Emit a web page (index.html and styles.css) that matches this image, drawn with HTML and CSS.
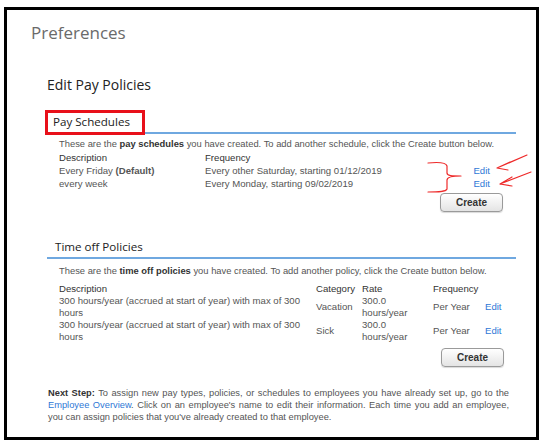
FILE: index.html
```html
<!DOCTYPE html>
<html>
<head>
<meta charset="utf-8">
<link rel="stylesheet" href="styles.css">
</head>
<body>
<div class="frame">
  <h1 class="page-title">Preferences</h1>
  <div class="content">
    <h2 class="page-sub">Edit Pay Policies</h2>

    <section class="block">
      <h3 class="block-head"><span class="hl-box"></span>Pay Schedules</h3>
      <p class="intro">These are the <b>pay schedules</b> you have created. To add another schedule, click the Create button below.</p>
      <div class="grid sched">
        <div class="th">Description</div><div class="th">Frequency</div><div></div>
        <div>Every Friday <b>(Default)</b></div><div>Every other Saturday, starting 01/12/2019</div><a class="link">Edit</a>
        <div>every week</div><div>Every Monday, starting 09/02/2019</div><a class="link">Edit</a>
      </div>
      <div class="actions a1"><button class="btn">Create</button></div>
    </section>

    <section class="block b2">
      <h3 class="block-head">Time off Policies</h3>
      <p class="intro i2">These are the <b>time off policies</b> you have created. To add another policy, click the Create button below.</p>
      <div class="grid timeoff">
        <div class="th">Description</div><div class="th">Category</div><div class="th">Rate</div><div class="th">Frequency</div><div></div>
        <div class="desc">300 hours/year (accrued at start of year) with max of 300 hours</div><div class="mid">Vacation</div><div>300.0<br>hours/year</div><div class="mid">Per Year</div><a class="link mid">Edit</a>
        <div class="desc">300 hours/year (accrued at start of year) with max of 300 hours</div><div class="mid">Sick</div><div>300.0<br>hours/year</div><div class="mid">Per Year</div><a class="link mid">Edit</a>
      </div>
      <div class="actions a2"><button class="btn">Create</button></div>
    </section>

    <p class="next"><b>Next Step:</b> To assign new pay types, policies, or schedules to employees you have already set up, go to the <a class="link">Employee Overview</a>. Click on an employee's name to edit their information. Each time you add an employee, you can assign policies that you've already created to that employee.</p>
  </div>

  <!-- hand-drawn red marks around the Edit links -->
  <svg class="marks" width="551" height="447" viewBox="0 0 551 447">
    <g fill="none" stroke="#ee2a2a" stroke-width="1.2" stroke-linecap="round" stroke-linejoin="round">
      <path d="M428 163 C438 162 446 162 447 166 L447 173 C447 176 452 176 461 176 C452 176 447 177 447 180 L447 189 C446 192 438 192 428 192"/>
      <path d="M527 155 L497 168 M497 168 L510 162 M497 168 L508 170"/>
      <path d="M531 172 L500 184 M500 184 L512 177 M500 184 L512 186"/>
    </g>
  </svg>
</div>
</body>
</html>
```

FILE: styles.css
```css
html, body {
  margin: 0;
  padding: 0;
  background: #fff;
}

.frame {
  position: relative;
  box-sizing: border-box;
  width: 535px;
  height: 433px;
  margin: 7px 0 0 4px;
  border: 3px solid #000;
  padding: 12px 0 0 0;
  font-family: "Liberation Sans", Arial, sans-serif;
  font-size: 9.6px;
  color: #505050;
}

.page-title {
  margin: 0 0 0 24px;
  font-family: "Open Sans", "Noto Sans", sans-serif;
  font-weight: 400;
  font-size: 17px;
  line-height: 22px;
  color: #6a6a6a;
}

.content {
  margin: 0 0 0 40px;
  width: 469px;
}

.page-sub {
  margin: 31px 0 0 0;
  font-family: "Open Sans", "Noto Sans", sans-serif;
  font-weight: 400;
  font-size: 14px;
  line-height: 20px;
  color: #222;
}

.block { margin-top: 19px; }
.block.b2 { margin-top: 27px; }

.block-head {
  position: relative;
  margin: 0;
  padding: 0 0 2px 6px;
  font-family: "Open Sans", "Noto Sans", sans-serif;
  font-weight: 400;
  font-size: 11.6px;
  line-height: 16px;
  color: #222;
  border-bottom: 2px solid #6fa8e0;
}
.b2 .block-head { padding-left: 8px; }

/* red highlight rectangle around the section heading */
.hl-box {
  position: absolute;
  left: -2px;
  top: -4px;
  width: 100px;
  height: 25px;
  box-sizing: border-box;
  border: 3px solid #e8101a;
}

.intro {
  margin: 4px 0 0 12px;
  font-size: 9.4px;
  line-height: 12px;
  color: #555;
  white-space: nowrap;
}
.intro b, .next b { color: #333; }
.intro.i2 { margin-top: 6px; }

.grid {
  display: grid;
  margin-left: 12px;
  color: #555;
}
.th { color: #333; }

.sched {
  width: 431px;
  grid-template-columns: 146px 1fr auto;
  line-height: 13px;
  margin-top: 1px;
}

.timeoff {
  margin-top: 6px;
  width: 443px;
  grid-template-columns: 257px 46px 71px 52px auto;
  line-height: 12px;
}
.timeoff .desc { padding-right: 8px; }
.timeoff .mid { align-self: center; }

.link {
  color: #2f78d6;
  text-decoration: none;
}

.actions {
  display: flex;
  justify-content: flex-end;
}
.actions.a1 { width: 456px; margin-top: 3px; }
.actions.a2 { width: 457px; margin-top: 5px; }

.btn {
  box-sizing: border-box;
  width: 63px;
  height: 19px;
  padding: 0;
  font-family: "Liberation Sans", Arial, sans-serif;
  font-size: 10px;
  font-weight: bold;
  color: #333;
  border: 1px solid #9a9a9a;
  border-radius: 4px;
  background: linear-gradient(#ffffff, #e4e4e4);
  box-shadow: 0 1px 1px rgba(0,0,0,0.15);
}

.next {
  margin: 20px 0 0 1px;
  width: 461px;
  font-size: 9.3px;
  line-height: 12px;
  color: #555;
  text-align: justify;
}

.marks {
  position: absolute;
  left: -7px;
  top: -10px;
  pointer-events: none;
}
```
